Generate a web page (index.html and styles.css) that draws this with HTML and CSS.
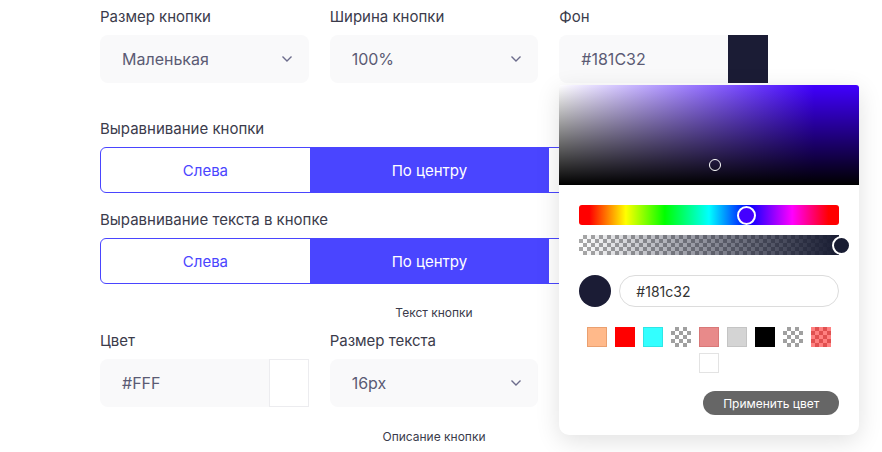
FILE: index.html
```html
<!DOCTYPE html>
<html>
<head>
  <meta charset="utf-8">
  <link rel="stylesheet" href="styles.css">
</head>
<body>
  <div class="form">
    <div class="row">
      <div class="field">
        <div class="label">Размер кнопки</div>
        <div class="select">Маленькая
          <svg class="chevron" viewBox="0 0 12 8"><path d="M1.5 1.5 6 6l4.5-4.5"/></svg>
        </div>
      </div>
      <div class="field">
        <div class="label">Ширина кнопки</div>
        <div class="select">100%
          <svg class="chevron" viewBox="0 0 12 8"><path d="M1.5 1.5 6 6l4.5-4.5"/></svg>
        </div>
      </div>
      <div class="field picker-field">
        <div class="label">Фон</div>
        <div class="color-input">
          <div class="color-text">#181C32</div>
          <div class="color-swatch dark"></div>
        </div>

        <div class="picker">
          <div class="saturation">
            <div class="sat-cursor"></div>
          </div>
          <div class="picker-body">
            <div class="hue">
              <div class="thumb hue-thumb"></div>
            </div>
            <div class="alpha">
              <div class="alpha-fill"></div>
              <div class="thumb alpha-thumb"></div>
            </div>
            <div class="current">
              <div class="current-dot"></div>
              <div class="hex-input">#181c32</div>
            </div>
            <div class="presets">
              <span class="preset peach"></span>
              <span class="preset red"></span>
              <span class="preset cyan"></span>
              <span class="preset checker"></span>
              <span class="preset pink"></span>
              <span class="preset grey"></span>
              <span class="preset black"></span>
              <span class="preset checker"></span>
              <span class="preset checker-red"></span>
              <span class="preset white"></span>
            </div>
            <div class="picker-actions">
              <button class="apply-btn">Применить цвет</button>
            </div>
          </div>
        </div>
      </div>
    </div>

    <div class="group">
      <div class="label">Выравнивание кнопки</div>
      <div class="segmented">
        <div class="segment">Слева</div>
        <div class="segment active">По центру</div>
        <div class="segment">Справа</div>
      </div>
    </div>

    <div class="group">
      <div class="label">Выравнивание текста в кнопке</div>
      <div class="segmented">
        <div class="segment">Слева</div>
        <div class="segment active">По центру</div>
        <div class="segment">Справа</div>
      </div>
    </div>

    <div class="section-title">Текст кнопки</div>

    <div class="row">
      <div class="field">
        <div class="label">Цвет</div>
        <div class="color-input">
          <div class="color-text">#FFF</div>
          <div class="color-swatch light"></div>
        </div>
      </div>
      <div class="field">
        <div class="label">Размер текста</div>
        <div class="select">16px
          <svg class="chevron" viewBox="0 0 12 8"><path d="M1.5 1.5 6 6l4.5-4.5"/></svg>
        </div>
      </div>
      <div class="field"></div>
    </div>

    <div class="section-title last">Описание кнопки</div>
  </div>
</body>
</html>
```

FILE: styles.css
```css
body {
  margin: 0;
  background: #fff;
  font-family: "Inter", "Noto Sans", sans-serif;
  color: #3b3b4b;
}

.form {
  width: 668px;
  margin: 7px 0 0 100px;
}

.row {
  display: grid;
  grid-template-columns: repeat(3, 1fr);
  column-gap: 21px;
}

.label {
  font-size: 15px;
  line-height: 20px;
  color: #3b3b4b;
  margin-bottom: 8px;
}

/* Selects */
.select {
  height: 48px;
  background: #f9f9fa;
  border-radius: 8px;
  display: flex;
  align-items: center;
  justify-content: space-between;
  padding: 0 16px 0 22px;
  font-size: 16px;
  color: #5b5b74;
}

.chevron {
  width: 12px;
  height: 8px;
  fill: none;
  stroke: #6c6c8c;
  stroke-width: 1.4;
}

/* Colour inputs */
.color-input {
  display: flex;
  height: 48px;
}

.color-text {
  flex: 1;
  background: #f9f9fa;
  border-radius: 8px 0 0 8px;
  display: flex;
  align-items: center;
  padding-left: 22px;
  font-size: 16px;
  color: #5b5b74;
}

.color-swatch {
  width: 40px;
  box-sizing: border-box;
}

.color-swatch.dark {
  background: #1b1c35;
}

.color-swatch.light {
  background: #fff;
  border: 1px solid #ececef;
}

/* Segmented control */
.row + .group {
  margin-top: 36px;
}

.group + .group {
  margin-top: 17px;
}

.segmented {
  display: flex;
  height: 46px;
  border: 1px solid #4a45ff;
  border-radius: 6px;
  overflow: hidden;
  box-sizing: border-box;
}

.segment {
  flex: 1 1 auto;
  display: flex;
  align-items: center;
  justify-content: center;
  font-size: 15px;
  color: #4a45ff;
}

.segment.active {
  background: #4a45ff;
  color: #fff;
}

.section-title {
  text-align: center;
  font-size: 12px;
  line-height: 16px;
  color: #3b3b4b;
  margin: 21px 0 10px;
}

.section-title.last {
  margin-top: 22px;
}

/* Colour picker popover */
.picker-field {
  position: relative;
}

.picker {
  position: absolute;
  top: 78px;
  left: 0;
  width: 300px;
  background: #fff;
  border-radius: 3px 3px 10px 10px;
  box-shadow: 0 6px 24px rgba(0, 0, 0, 0.12);
  z-index: 10;
}

.saturation {
  position: relative;
  height: 100px;
  border-radius: 3px 3px 0 0;
  background:
    linear-gradient(to top, #000, rgba(0, 0, 0, 0)),
    linear-gradient(to right, #fff, #4000ff 85%);
}

.sat-cursor {
  position: absolute;
  left: 150px;
  top: 74px;
  width: 10px;
  height: 10px;
  border: 1px solid #fff;
  border-radius: 50%;
}

.picker-body {
  padding: 20px;
}

.hue,
.alpha {
  position: relative;
  height: 20px;
}

.hue {
  border-radius: 3px;
  background: linear-gradient(to right, #f00 4%, #ff0 18%, #0f0 33%, #0ff 50%, #00f 65%, #f0f 82%, #f00 96%);
}

.alpha {
  margin-top: 10px;
  background-color: #fff;
  background-image:
    linear-gradient(45deg, #a8a8a8 25%, transparent 25%, transparent 75%, #a8a8a8 75%),
    linear-gradient(45deg, #a8a8a8 25%, transparent 25%, transparent 75%, #a8a8a8 75%);
  background-size: 8px 8px;
  background-position: 0 0, 4px 4px;
}

.alpha-fill {
  position: absolute;
  inset: 0;
  background: linear-gradient(to right, rgba(24, 28, 50, 0), #181c32);
}

.thumb {
  position: absolute;
  top: 50%;
  width: 15px;
  height: 15px;
  margin: -9.5px 0 0 -9.5px;
  border: 2px solid #fff;
  border-radius: 50%;
}

.hue-thumb {
  left: 167px;
  background: #4400ff;
}

.alpha-thumb {
  left: 262px;
  background: #181c32;
}

.current {
  display: flex;
  align-items: center;
  gap: 8px;
  margin-top: 20px;
}

.current-dot {
  width: 32px;
  height: 32px;
  border-radius: 50%;
  background: #1b1c35;
}

.hex-input {
  flex: 1;
  height: 32px;
  box-sizing: border-box;
  border: 1px solid #dcdcdc;
  border-radius: 16px;
  padding-left: 16px;
  display: flex;
  align-items: center;
  font-size: 14px;
  color: #333;
}

.presets {
  display: flex;
  flex-wrap: wrap;
  justify-content: center;
  margin-top: 20px;
}

.preset {
  width: 20px;
  height: 20px;
  margin: 0 4px 6px;
  box-sizing: border-box;
}

.preset.peach { background: #ffb98a; border: 1px solid #eaa070; }
.preset.red { background: #f00; }
.preset.cyan { background: #33ffff; border: 1px solid #2ee6e6; }
.preset.pink { background: #e88a8a; border: 1px solid #d87878; }
.preset.grey { background: #d4d4d4; border: 1px solid #c4c4c4; }
.preset.black { background: #000; }
.preset.white { background: #fff; border: 1px solid #e3e3e3; }

.preset.checker,
.preset.checker-red {
  background-color: #fff;
  background-image:
    linear-gradient(45deg, #a0a0a0 25%, transparent 25%, transparent 75%, #a0a0a0 75%),
    linear-gradient(45deg, #a0a0a0 25%, transparent 25%, transparent 75%, #a0a0a0 75%);
  background-size: 8px 8px;
  background-position: 0 0, 4px 4px;
}

.preset.checker-red {
  background-color: #ff8080;
  background-image:
    linear-gradient(45deg, #e05050 25%, transparent 25%, transparent 75%, #e05050 75%),
    linear-gradient(45deg, #e05050 25%, transparent 25%, transparent 75%, #e05050 75%);
}

.picker-actions {
  display: flex;
  justify-content: flex-end;
  margin-top: 12px;
}

.apply-btn {
  background: #666;
  color: #fff;
  border: none;
  height: 24px;
  padding: 0 20px;
  border-radius: 12px;
  font-family: "Inter", "Noto Sans", sans-serif;
  font-size: 12px;
}
```
